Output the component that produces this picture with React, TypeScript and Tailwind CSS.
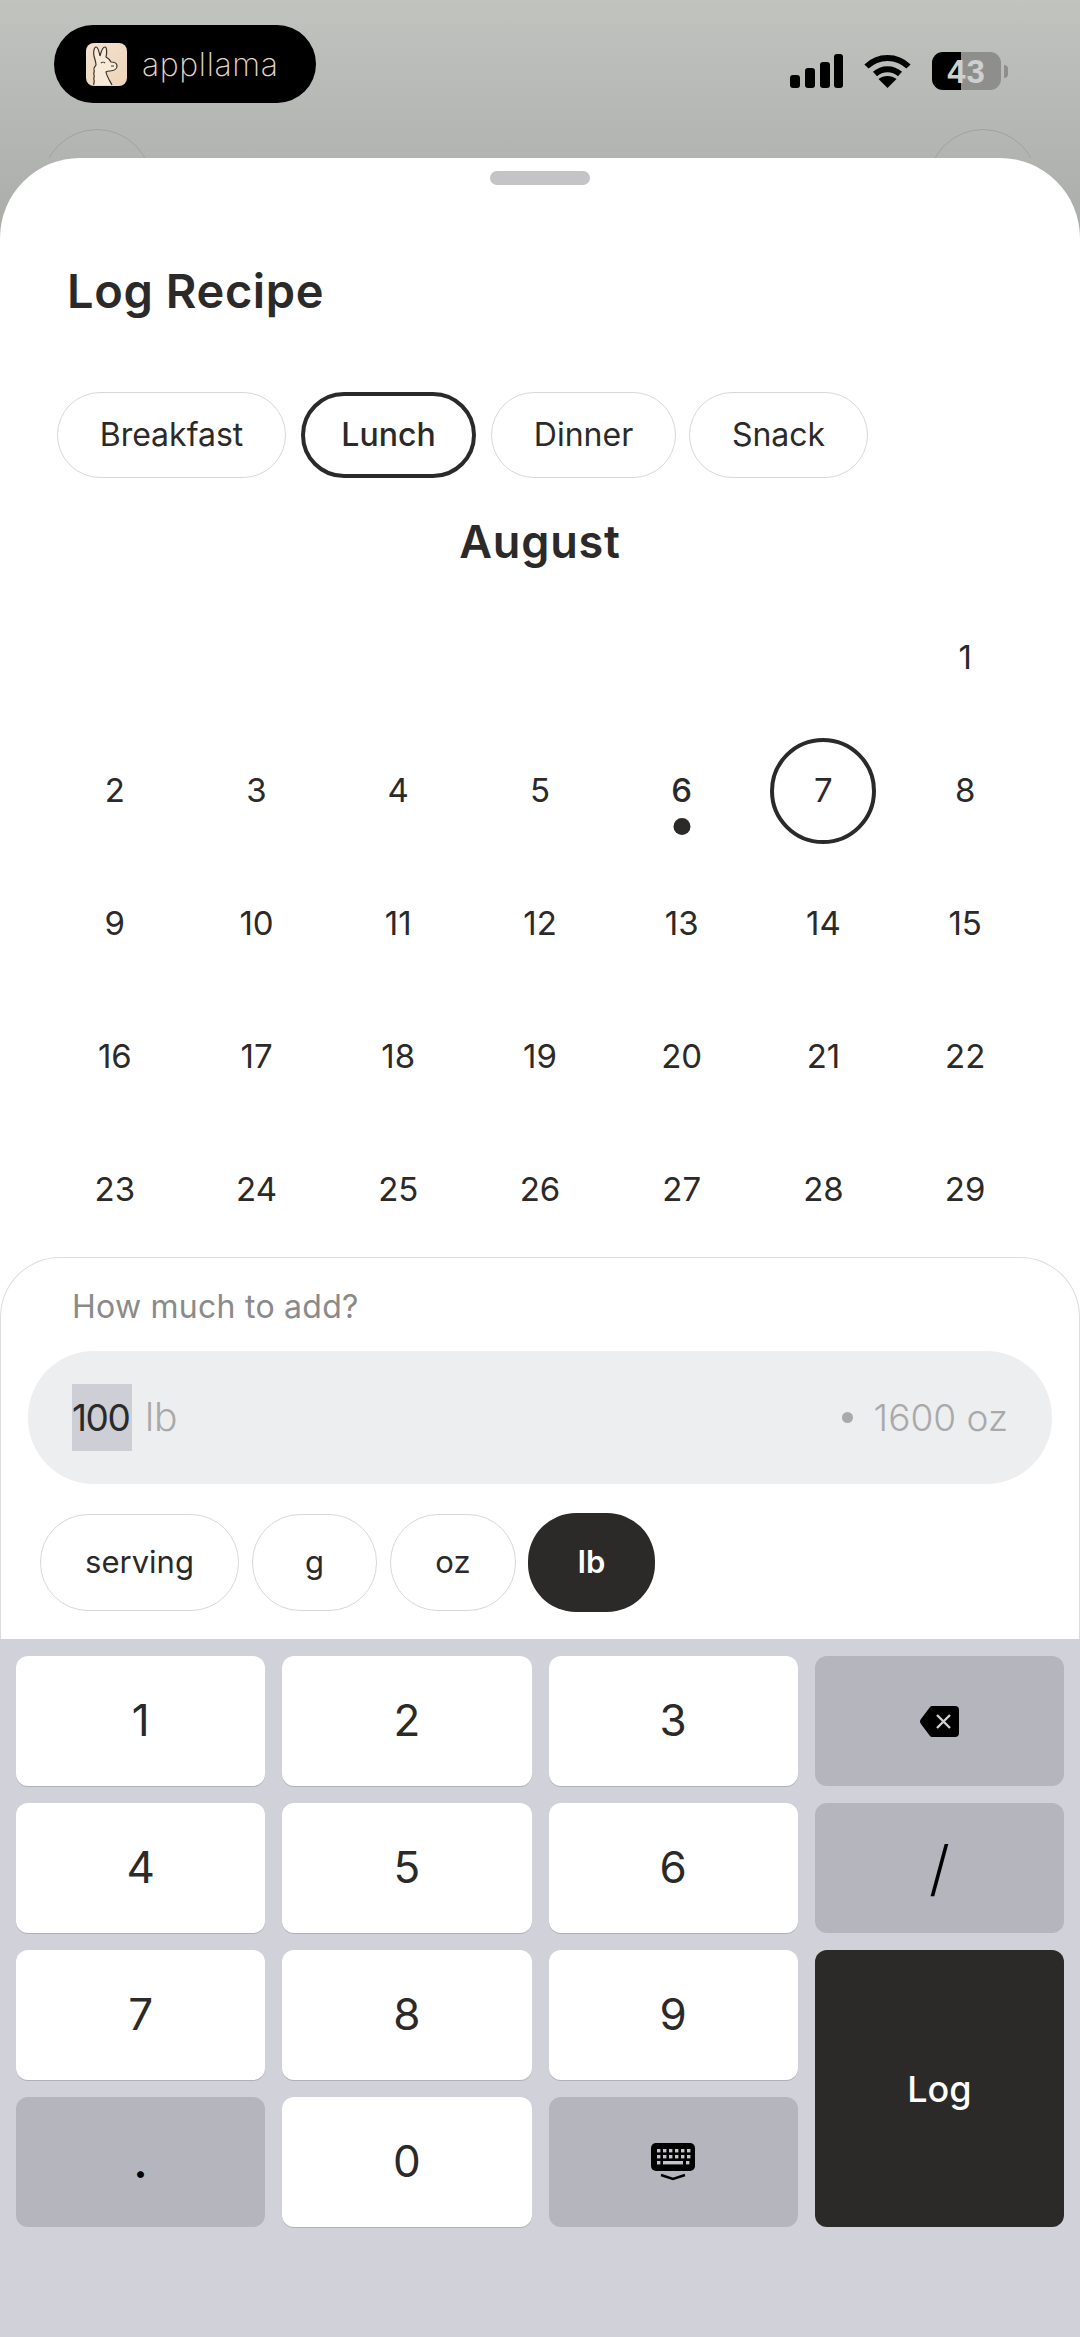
import type { ReactNode } from "react";

function MealChip({ label, w, active }: { label: string; w: string; active?: boolean }) {
  const look = active
    ? "border-[4px] border-[#2b2a29] font-medium"
    : "border border-[#d8d8d8]";
  return (
    <div className={`h-[86px] rounded-full flex items-center justify-center text-[32px] text-[#2b2a29] ${look} ${w}`}>
      {label}
    </div>
  );
}

function Llama() {
  return (
    <svg width="41" height="43" viewBox="0 0 41 43" className="shrink-0">
      <defs>
        <linearGradient id="lg" x1="0" y1="0" x2="1" y2="1">
          <stop offset="0" stopColor="#f3e2d0" />
          <stop offset="1" stopColor="#eed4b8" />
        </linearGradient>
      </defs>
      <rect width="41" height="43" rx="8" fill="url(#lg)" />
      <path
        d="M8 42c-1-2 1-3 0-5s1-3 0-5 1-3 0-5 1-3 2-5c0-3-1-5-2-9-1-3 0-9 2-9s3 4 4 9c1-4 3-9 5-9s2 6 1 10c2 1 4 3 5 5 3 0 6 1 6 4 0 3-3 5-7 5-2 0-3 0-4 1 1 5 4 9 6 13"
        fill="#f7ead9"
        stroke="#3a332c"
        strokeWidth="1.2"
      />
      <path d="M15 20c1-1 3-1 4 0M28 23h-3" fill="none" stroke="#3a332c" strokeWidth="1.1" />
    </svg>
  );
}

function Signal() {
  return (
    <svg width="53" height="34" viewBox="0 0 53 34">
      <rect x="0" y="21" width="10" height="13" rx="3" />
      <rect x="15" y="14" width="10" height="20" rx="3" />
      <rect x="30" y="8" width="10" height="26" rx="3" />
      <rect x="44" y="0" width="9" height="34" rx="3" />
    </svg>
  );
}

function Wifi() {
  return (
    <svg width="47" height="34" viewBox="0 0 47 34" fill="none" stroke="#000" strokeWidth="6">
      <path d="M2.5 12.5C14 1 33 1 44.5 12.5" />
      <path d="M11 20c7-6.5 18-6.5 25 0" />
      <path d="M23.5 34l-9-9c5-4 13-4 18 0z" fill="#000" stroke="none" />
    </svg>
  );
}

function Battery() {
  return (
    <div className="flex items-center gap-[3px]">
      <div className="relative w-[69px] h-[38px] rounded-[11px] overflow-hidden bg-[#8e8f8d] flex items-center justify-center">
        <div className="absolute left-0 top-0 bottom-0 w-[29px] bg-black" />
        <span className="relative text-[33px] font-semibold leading-none text-[#cfd0cd] font-['Liberation_Sans',sans-serif] tracking-[1px]">43</span>
      </div>
      <div className="w-[4px] h-[13px] rounded-r-full bg-[#8e8f8d]" />
    </div>
  );
}

function Backspace() {
  return (
    <svg width="39" height="33" viewBox="0 0 39 33">
      <path d="M12 1h23a4 4 0 0 1 4 4v23a4 4 0 0 1-4 4H12a3 3 0 0 1-2-1L1 19a4 4 0 0 1 0-5l9-12a3 3 0 0 1 2-1z" fill="#000" />
      <path d="M17 10l13 13M30 10L17 23" stroke="#d0d1d4" strokeWidth="2.4" />
    </svg>
  );
}

function KeyboardIcon() {
  const dots: ReactNode[] = [];
  for (let r = 0; r < 2; r++) {
    for (let c = 0; c < 6; c++) {
      dots.push(<rect key={`${r}-${c}`} x={6 + c * 6} y={6 + r * 6} width="3.4" height="3.4" fill="#c4c5ca" />);
    }
  }
  return (
    <svg width="44" height="38" viewBox="0 0 44 38">
      <rect width="44" height="28" rx="5" fill="#000" />
      {dots}
      <rect x="6" y="18" width="3.4" height="3.4" fill="#c4c5ca" />
      <rect x="12" y="18" width="20" height="3.4" fill="#c4c5ca" />
      <rect x="35" y="18" width="3.4" height="3.4" fill="#c4c5ca" />
      <path d="M10 32l12 4 12-4" fill="none" stroke="#000" strokeWidth="2.4" />
    </svg>
  );
}

const cal: (number | null)[][] = [
  [null, null, null, null, null, null, 1],
  [2, 3, 4, 5, 6, 7, 8],
  [9, 10, 11, 12, 13, 14, 15],
  [16, 17, 18, 19, 20, 21, 22],
  [23, 24, 25, 26, 27, 28, 29],
];

function Day({ n }: { n: number | null }) {
  if (n === null) return <div className="h-[133px]" />;
  return (
    <div className="h-[133px] relative flex items-center justify-center text-[33px] text-[#2b2a29]">
      {n === 7 ? (
        <div className="w-[106px] h-[106px] rounded-full border-[4px] border-[#2b2a29] flex items-center justify-center">7</div>
      ) : (
        <span className={n === 6 ? "font-medium" : ""}>{n}</span>
      )}
      {n === 6 && <div className="absolute left-1/2 -translate-x-1/2 top-[94px] w-[17px] h-[17px] rounded-full bg-[#2b2a29]" />}
    </div>
  );
}

function Key({ children, kind = "white" }: { children: ReactNode; kind?: "white" | "gray" }) {
  const c = kind === "white" ? "bg-white shadow-[0_1px_0_#b0b1b8] pb-[2px]" : "bg-[#b4b5bd]";
  return (
    <div className={`h-[130px] rounded-[12px] flex items-center justify-center text-[44px] text-[#2b2a29] ${c}`}>
      {children}
    </div>
  );
}

export default function App() {
  return (
    <div className="w-[1080px] h-[2337px] overflow-hidden flex flex-col bg-[linear-gradient(#c1c3bf_0px,#a9aca8_240px)] font-['Inter',sans-serif]">
      {/* status + ghost buttons */}
      <div className="h-[158px] shrink-0 overflow-hidden flex flex-col">
        <div className="h-[129px] shrink-0 flex justify-between pl-[54px] pr-[72px]">
          <div className="mt-[25px] w-[262px] h-[78px] rounded-full bg-black flex items-center pl-[32px] gap-[15px]">
            <Llama />
            <span className="text-[32px] font-extralight text-[#e4d6c4] tracking-[0.6px] mt-[2px]">appllama</span>
          </div>
          <div className="mt-[52px] h-[38px] flex items-center gap-[21px]">
            <Signal />
            <Wifi />
            <Battery />
          </div>
        </div>
        <div className="flex justify-between px-[42px]">
          <div className="w-[110px] h-[110px] rounded-full border-[1.5px] border-[#a0a2a0]" />
          <div className="w-[110px] h-[110px] rounded-full border-[1.5px] border-[#a0a2a0]" />
        </div>
      </div>

      {/* sheet */}
      <div className="flex-1 bg-white rounded-t-[80px] flex flex-col overflow-hidden">
        <div className="mt-[13px] mx-auto w-[100px] h-[14px] rounded-full bg-[#c4c4c6] shrink-0" />
        <div className="mt-[76px] pl-[67px] h-[60px] flex items-center text-[47px] font-semibold text-[#2b2a29] tracking-[0.6px]">Log Recipe</div>

        <div className="mt-[71px] pl-[57px] flex">
          <MealChip label="Breakfast" w="w-[229px]" />
          <div className="ml-[15px]"><MealChip label="Lunch" w="w-[175px]" active /></div>
          <div className="ml-[15px]"><MealChip label="Dinner" w="w-[185px]" /></div>
          <div className="ml-[13px]"><MealChip label="Snack" w="w-[179px]" /></div>
        </div>

        <div className="mt-[34px] h-[60px] flex items-center justify-center text-[45px] font-semibold text-[#2b2a29] tracking-[0.8px]">August</div>

        <div className="mt-[19px] px-[44px] grid grid-cols-7">
          {cal.flat().map((n, i) => (
            <Day key={i} n={n} />
          ))}
        </div>

        {/* amount panel */}
        <div className="mt-[1px] h-[382px] shrink-0 rounded-t-[60px] border-t border-x border-[#dcdcdc] bg-white">
          <div className="mt-[29px] ml-[71px] h-[40px] flex items-center text-[32px] tracking-[0.25px] text-[#8a8a8a]">How much to add?</div>
          <div className="mt-[24px] ml-[27px] mr-[27px] h-[133px] rounded-[66px] bg-[#edeef0] flex items-center pl-[44px] pr-[44px] text-[37px]">
            <span className="h-[67px] w-[60px] bg-[#cdced6] flex items-center text-[#2b2a29] tracking-[-1.5px]">100</span>
            <span className="ml-[13px] text-[#a9a9a9] font-light text-[39px]">lb</span>
            <span className="ml-auto w-[11px] h-[11px] rounded-full bg-[#a9a9a9]" />
            <span className="ml-[21px] text-[#a9a9a9] font-light">1600 oz</span>
          </div>
          <div className="mt-[29px] ml-[39px] flex items-center h-[99px] text-[31px] text-[#2b2a29]">
            <div className="w-[199px] h-[97px] rounded-[48px] border border-[#d8d8d8] flex items-center justify-center">serving</div>
            <div className="ml-[13px] w-[125px] h-[97px] rounded-[48px] border border-[#d8d8d8] flex items-center justify-center">g</div>
            <div className="ml-[13px] w-[126px] h-[97px] rounded-[48px] border border-[#d8d8d8] flex items-center justify-center">oz</div>
            <div className="ml-[12px] w-[127px] h-[99px] rounded-[48px] bg-[#2b2a29] text-white font-semibold flex items-center justify-center">lb</div>
          </div>
        </div>

        {/* keyboard */}
        <div className="flex-1 bg-[#d0d1d9] pt-[17px] px-[16px]">
          <div className="grid grid-cols-4 gap-[17px]">
            <Key>1</Key>
            <Key>2</Key>
            <Key>3</Key>
            <Key kind="gray"><Backspace /></Key>
            <Key>4</Key>
            <Key>5</Key>
            <Key>6</Key>
            <Key kind="gray"><span className="text-[60px] font-light text-black">/</span></Key>
            <Key>7</Key>
            <Key>8</Key>
            <Key>9</Key>
            <div className="row-span-2 rounded-[12px] bg-[#2b2a29] flex items-center justify-center text-[36px] font-medium text-white">Log</div>
            <Key kind="gray"><span className="font-semibold text-black">.</span></Key>
            <Key>0</Key>
            <Key kind="gray"><KeyboardIcon /></Key>
          </div>
        </div>
      </div>
    </div>
  );
}
